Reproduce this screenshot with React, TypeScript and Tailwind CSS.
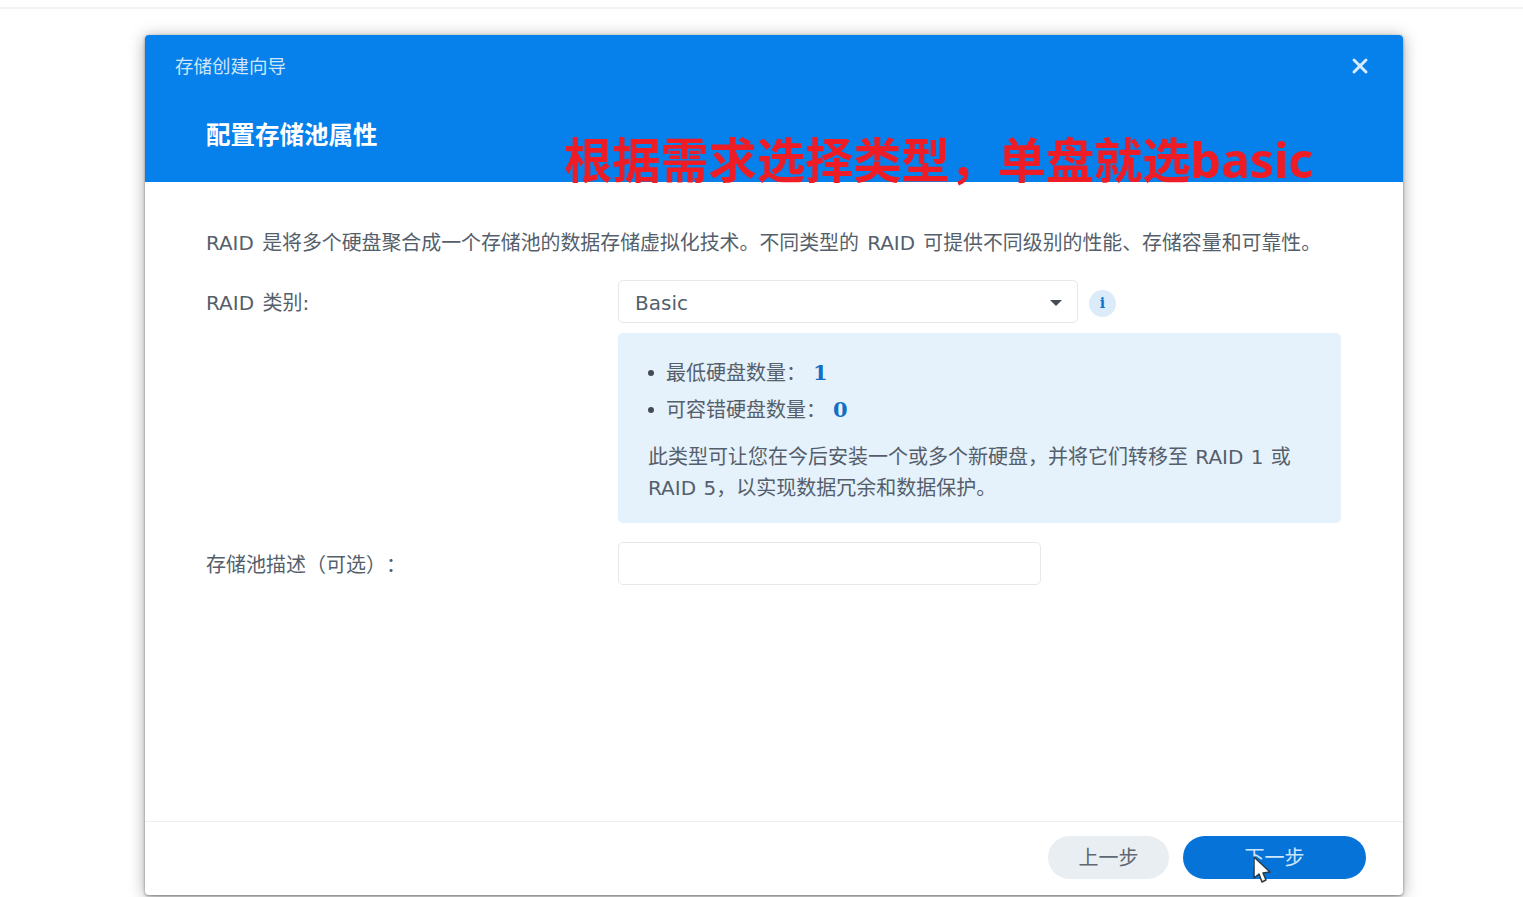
import { X } from 'lucide-react'

const font = { cjk: "font-['DejaVu_Sans','Noto_Sans_CJK_SC',sans-serif]" }

function FormRow({ label, children }: { label: string; children: React.ReactNode }) {
  return (
    <div className="flex">
      <div className="w-[412px] shrink-0 h-[43px] pt-[2px] flex items-center text-[20px] text-[#555f6b] [word-spacing:2px]">{label}</div>
      {children}
    </div>
  )
}

export default function App() {
  return (
    <div className={`${font.cjk} w-[1523px] h-[897px] overflow-hidden bg-white [text-spacing-trim:space-all]`}>
      <div className="h-[9px] border-b-2 border-[#f1f2f3]" />

      {/* Dialog */}
      <div className="relative ml-[145px] mt-[26px] w-[1258px] h-[860px] flex flex-col rounded-[4px] bg-white shadow-[0_1px_3px_rgba(0,0,0,0.4),0_2px_16px_rgba(0,0,0,0.35)]">
        <div className="relative h-[147px] shrink-0 rounded-t-[4px] bg-[#0680ea] text-white">
          <div className="pl-[30px] pt-[18px] text-[18.5px] leading-[27px] text-[#cfe5fb]">存储创建向导</div>
          <div className="pl-[61px] pt-[38px] text-[24.5px] leading-[36px] font-bold">配置存储池属性</div>
          <button className="absolute right-[31px] top-[19px] text-[#d8eafc]">
            <X size={24} strokeWidth={3} />
          </button>
          <div className="absolute left-[419px] top-[89px] whitespace-nowrap font-['Noto_Sans','Noto_Sans_CJK_SC',sans-serif] text-[48.2px] leading-[70px] font-bold text-[#ee1c25]">
            根据需求选择类型，单盘就选basic
          </div>
        </div>

        {/* Body */}
        <div className="flex-1 pl-[61px] pr-[62px] pt-[47px]">
          <p className="text-[19.9px] leading-[30px] text-[#555f6b] whitespace-nowrap mb-[21px] [word-spacing:2px]">
            RAID 是将多个硬盘聚合成一个存储池的数据存储虚拟化技术。不同类型的 RAID 可提供不同级别的性能、存储容量和可靠性。
          </p>

          <FormRow label="RAID 类别:">
            <div className="w-[460px] h-[43px] pt-[2px] flex items-center justify-between pl-[16px] pr-[15px] rounded-[5px] border border-[#e6e8eb] text-[20px] text-[#555f6b]">
              <span>Basic</span>
              <span className="w-0 h-0 border-x-[6px] border-x-transparent border-t-[6px] border-t-[#444b52]" />
            </div>
            <div className="ml-[11px] mt-[10px] w-[27px] h-[27px] rounded-full bg-[#dcebfa] flex items-center justify-center font-['DejaVu_Serif',serif] font-bold text-[14px] text-[#0b72d0]">
              i
            </div>
          </FormRow>

          <div className="ml-[412px] mt-[10px] h-[190px] rounded-[5px] bg-[#e5f1fb] pl-[30px] pr-[40px] pt-[22px] text-[20px] text-[#555f6b]">
            <div className="flex items-center h-[36px]">
              <span className="w-[6px] h-[6px] rounded-full bg-[#444b52] mr-[12px]" />
              <span>最低硬盘数量：</span>
              <span className="ml-[7px] font-['DejaVu_Serif',serif] font-bold text-[21px] text-[#1270c4]">1</span>
            </div>
            <div className="flex items-center h-[37px]">
              <span className="w-[6px] h-[6px] rounded-full bg-[#444b52] mr-[12px]" />
              <span>可容错硬盘数量：</span>
              <span className="ml-[7px] font-['DejaVu_Serif',serif] font-bold text-[21px] text-[#1270c4]">0</span>
            </div>
            <p className="mt-[14px] leading-[31px] [word-spacing:1px]">
              此类型可让您在今后安装一个或多个新硬盘，并将它们转移至 RAID 1 或<br />
              RAID 5，以实现数据冗余和数据保护。
            </p>
          </div>

          <div className="mt-[19px]">
            <FormRow label="存储池描述（可选）：">
              <div className="w-[423px] h-[43px] rounded-[5px] border border-[#e6e8eb]" />
            </FormRow>
          </div>
        </div>

        {/* Footer */}
        <div className="relative h-[74px] shrink-0 border-t border-[#eef0f2] flex items-start justify-end gap-[14px] pt-[14px] pr-[37px]">
          <button className="w-[121px] h-[43px] rounded-full bg-[#e9eef3] text-[20px] text-[#5f6873]">上一步</button>
          <button className="w-[183px] h-[43px] rounded-full bg-[#0673d8] text-[20px] text-[#cfe5fb]">下一步</button>
          <svg className="absolute left-[1107px] top-[34px]" width="20" height="30" viewBox="0 0 20 30">
            <path d="M2 1 L2 22 L7 18 L10 26 L14 24 L11 17 L18 16 Z" fill="#fff" stroke="#2b3a48" strokeWidth="1.5" strokeLinejoin="round" />
          </svg>
        </div>
      </div>
    </div>
  )
}
